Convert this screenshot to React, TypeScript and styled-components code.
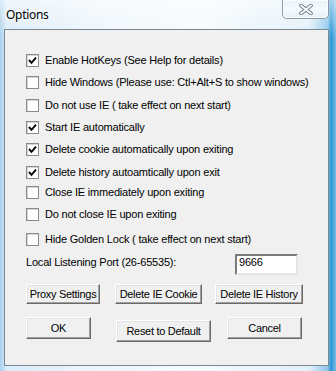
import styled, { createGlobalStyle } from 'styled-components';
import React from 'react';

const GlobalStyle = createGlobalStyle`
  html, body {
    margin: 0;
    padding: 0;
    background: #d8eaf6;
  }
`;

const Frame = styled.div`
  width: 336px;
  height: 371px;
  box-sizing: border-box;
  display: flex;
  flex-direction: column;
  overflow: hidden;
  background:
    linear-gradient(180deg, rgba(255,255,255,0.55) 0%, rgba(255,255,255,0) 10%),
    linear-gradient(90deg, #a9d0ec 0%, #dcecf8 2%, #eef6fc 30%, #f5fafd 60%, #e2f0f9 92%, #8cc6ea 97.5%, #2b95d3 98.5%, #79bde6 100%);
  font-family: "Liberation Sans", Arial, sans-serif;
  color: #000;
`;

const TitleBar = styled.div`
  height: 29px;
  display: flex;
  justify-content: space-between;
  align-items: flex-start;
  flex-shrink: 0;
`;

const Title = styled.div`
  padding: 7px 0 0 6px;
  font-family: "Noto Sans", "Open Sans", sans-serif;
  font-size: 12px;
  letter-spacing: -0.3px;
  line-height: 15px;
  text-shadow: 0 0 6px #fff, 0 0 4px #fff;
`;

const CloseButton = styled.div`
  width: 45px;
  height: 18px;
  margin-right: 7px;
  border: 1px solid #8d9aa6;
  border-top: none;
  border-radius: 0 0 5px 5px;
  background: linear-gradient(180deg, #e9f3f9 0%, #f6fafd 50%, #e6f1f8 100%);
  box-shadow: inset 0 0 0 1px rgba(255,255,255,0.8);
  display: flex;
  align-items: center;
  justify-content: center;
`;

const Client = styled.div`
  flex: 1;
  margin: 0 7px 5px 4px;
  border: 1px solid #7b8894;
  background: #f0f0f0;
  padding: 20px 25px 0 21px;
  display: flex;
  flex-direction: column;
`;

const OptionRow = styled.label<{ $space: number }>`
  height: 20px;
  margin-top: ${p => p.$space}px;
  display: flex;
  align-items: center;
  gap: 6px;
  font-size: 11px;
  letter-spacing: -0.2px;
  white-space: nowrap;
`;

const Box = styled.span`
  width: 11px;
  height: 11px;
  border: 1px solid #8a8a8a;
  background: #fff;
  box-shadow: inset 1px 1px 0 #d6d6d6;
  display: flex;
  align-items: center;
  justify-content: center;
  flex-shrink: 0;
`;

const PortRow = styled.div`
  margin-top: 5px;
  height: 21px;
  display: flex;
  justify-content: space-between;
  align-items: flex-start;
  font-size: 11px;
  letter-spacing: -0.2px;
`;

const PortLabel = styled.span`
  line-height: 14px;
  padding-top: 1px;
`;

const PortInput = styled.div`
  width: 57px;
  height: 17px;
  margin-right: 5px;
  border: 2px solid;
  border-color: #7a7a7a #e6e6e6 #e6e6e6 #7a7a7a;
  background: #fff;
  padding-left: 2px;
  font-size: 11px;
  line-height: 13px;
`;

const ButtonRow = styled.div<{ $space: number }>`
  margin-top: ${p => p.$space}px;
  display: flex;
  align-items: flex-start;
`;

const Button = styled.button<{ $w: number; $h: number; $left?: number; $drop?: number }>`
  width: ${p => p.$w}px;
  height: ${p => p.$h}px;
  margin-left: ${p => p.$left || 0}px;
  margin-top: ${p => p.$drop || 0}px;
  padding: 0;
  box-sizing: border-box;
  border: 1px solid;
  border-color: #ffffff #6a6a6a #6a6a6a #ffffff;
  box-shadow: inset -1px -1px 0 #a0a0a0, inset 1px 1px 0 #e3e3e3;
  background: #f0f0f0;
  font-family: "Liberation Sans", Arial, sans-serif;
  font-size: 11px;
  letter-spacing: -0.3px;
  color: #000;
`;

const options: { text: string; checked: boolean; space: number }[] = [
  { text: 'Enable HotKeys (See Help for details)', checked: true, space: 0 },
  { text: 'Hide Windows (Please use: Ctl+Alt+S to show windows)', checked: false, space: 2 },
  { text: 'Do not use IE ( take effect on next start)', checked: false, space: 3 },
  { text: 'Start IE automatically', checked: true, space: 2 },
  { text: 'Delete cookie automatically upon exiting', checked: true, space: 2 },
  { text: 'Delete history autoamtically upon exit', checked: true, space: 3 },
  { text: 'Close IE immediately upon exiting', checked: false, space: 0 },
  { text: 'Do not close IE upon exiting', checked: false, space: 2 },
  { text: 'Hide Golden Lock ( take effect on next start)', checked: false, space: 5 },
];

function Check() {
  return (
    <svg width="9" height="9" viewBox="0 0 9 9">
      <polyline points="1,4 3.5,6.8 8,1.6" fill="none" stroke="#000" strokeWidth="1.9" />
    </svg>
  );
}

export default function App(): JSX.Element {
  return (
    <React.Fragment>
      <GlobalStyle />
      <Frame>
        <TitleBar>
          <Title>Options</Title>
          <CloseButton>
            <svg width="14" height="11" viewBox="0 0 14 11">
              <path d="M2,1.5 L12,9.5 M12,1.5 L2,9.5" stroke="#6f7b86" strokeWidth="3.6" strokeLinecap="round" />
              <path d="M2,1.5 L12,9.5 M12,1.5 L2,9.5" stroke="#fff" strokeWidth="1.8" strokeLinecap="round" />
            </svg>
          </CloseButton>
        </TitleBar>
        <Client>
          {options.map(o => (
            <OptionRow key={o.text} $space={o.space}>
              <Box>{o.checked && <Check />}</Box>
              {o.text}
            </OptionRow>
          ))}
          <PortRow>
            <PortLabel>Local Listening Port (26-65535):</PortLabel>
            <PortInput>9666</PortInput>
          </PortRow>
          <ButtonRow $space={9}>
            <Button $w={74} $h={20}>Proxy Settings</Button>
            <Button $w={87} $h={20} $left={15}>Delete IE Cookie</Button>
            <Button $w={88} $h={20} $left={13}>Delete IE History</Button>
          </ButtonRow>
          <ButtonRow $space={13}>
            <Button $w={65} $h={22}>OK</Button>
            <Button $w={95} $h={22} $left={25} $drop={3}>Reset to Default</Button>
            <Button $w={75} $h={22} $left={16}>Cancel</Button>
          </ButtonRow>
        </Client>
      </Frame>
    </React.Fragment>
  );
}
